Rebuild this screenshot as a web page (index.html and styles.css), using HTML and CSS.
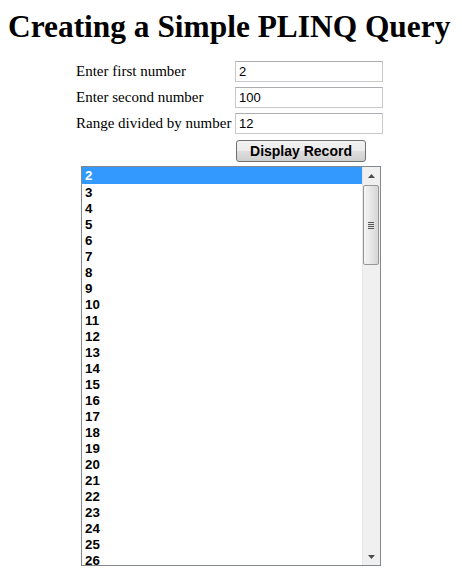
FILE: index.html
```html
<!DOCTYPE html>
<html>
<head>
<meta charset="utf-8">
<link rel="stylesheet" href="styles.css">
</head>
<body>
<h1 class="title">Creating a Simple PLINQ Query</h1>
<div class="form">
  <div class="row"><span class="label">Enter first number</span><div class="input">2</div></div>
  <div class="row"><span class="label">Enter second number</span><div class="input">100</div></div>
  <div class="row"><span class="label">Range divided by number</span><div class="input">12</div></div>
  <div class="row btnrow"><span class="label"></span><button class="btn">Display Record</button></div>
</div>
<div class="listbox">
  <div class="items">
    <div class="item selected">2</div>
    <div class="item">3</div>
    <div class="item">4</div>
    <div class="item">5</div>
    <div class="item">6</div>
    <div class="item">7</div>
    <div class="item">8</div>
    <div class="item">9</div>
    <div class="item">10</div>
    <div class="item">11</div>
    <div class="item">12</div>
    <div class="item">13</div>
    <div class="item">14</div>
    <div class="item">15</div>
    <div class="item">16</div>
    <div class="item">17</div>
    <div class="item">18</div>
    <div class="item">19</div>
    <div class="item">20</div>
    <div class="item">21</div>
    <div class="item">22</div>
    <div class="item">23</div>
    <div class="item">24</div>
    <div class="item">25</div>
    <div class="item">26</div>
  </div>
  <div class="scrollbar">
    <div class="arrow"><svg width="7" height="4" viewBox="0 0 7 4"><path d="M0 4 L3.5 0 L7 4 Z" fill="#4d4d4d"/></svg></div>
    <div class="track">
      <div class="thumb">
        <div class="grip"><span></span><span></span><span></span><span></span></div>
      </div>
    </div>
    <div class="arrow"><svg width="7" height="4" viewBox="0 0 7 4"><path d="M0 0 L3.5 4 L7 0 Z" fill="#4d4d4d"/></svg></div>
  </div>
</div>
</body>
</html>
```
FILE: styles.css
```css
html, body {
  margin: 0;
  padding: 0;
  background: #fff;
}
body {
  padding: 8px;
  font-family: "Liberation Serif", "Times New Roman", serif;
  color: #000;
}
.title {
  font-family: "Liberation Serif", "Times New Roman", serif;
  font-weight: bold;
  font-size: 31.4px;
  line-height: 37px;
  margin: 0 0 16px 0;
  white-space: nowrap;
}
.form {
  width: 310px;
  margin: 0 auto;
  display: flex;
  flex-direction: column;
  gap: 5px;
}
.row {
  display: flex;
  align-items: center;
  height: 21px;
}
.btnrow {
  height: 22px;
  margin-top: 1px;
  align-items: flex-start;
}
.label {
  width: 159px;
  padding-left: 0;
  font-size: 15px;
  white-space: nowrap;
}
.input {
  box-sizing: border-box;
  width: 148px;
  height: 21px;
  border: 1px solid #c9c9c9;
  border-top-color: #abadb3;
  padding: 2px 3px;
  font-family: "Liberation Sans", Arial, sans-serif;
  font-size: 13px;
  line-height: 15px;
}
.btn {
  box-sizing: border-box;
  width: 130px;
  height: 22px;
  margin-left: 1px;
  border: 1px solid #707070;
  border-radius: 3px;
  background: linear-gradient(#f2f2f2 0%, #ebebeb 50%, #dddddd 51%, #cfcfcf 100%);
  font-family: "Liberation Sans", Arial, sans-serif;
  font-weight: bold;
  font-size: 14px;
  color: #000;
  padding: 0;
}
.listbox {
  box-sizing: border-box;
  width: 300px;
  height: 400px;
  margin: 4px auto 0;
  border: 1px solid #828790;
  display: flex;
  overflow: hidden;
}
.items {
  flex: 1;
  overflow: hidden;
}
.item {
  height: 16px;
  line-height: 17px;
  padding-left: 3px;
  font-family: "Liberation Sans", Arial, sans-serif;
  font-weight: bold;
  font-size: 13.3px;
}
.item.selected {
  background: #3399ff;
  color: #fff;
  height: 17px;
}
.scrollbar {
  width: 17px;
  display: flex;
  flex-direction: column;
  background: #f0f0f0;
  border-left: 1px solid #e8e8e8;
}
.arrow {
  height: 17px;
  display: flex;
  align-items: center;
  justify-content: center;
}
.track {
  flex: 1;
}
.thumb {
  box-sizing: border-box;
  margin: 1px 0 0 0;
  width: 16px;
  height: 80px;
  border: 1px solid #979797;
  border-radius: 2px;
  background: linear-gradient(to right, #f5f5f5, #e6e6e6 50%, #d5d5d5);
  display: flex;
  align-items: center;
  justify-content: center;
}
.grip {
  display: flex;
  flex-direction: column;
  gap: 1px;
}
.grip span {
  display: block;
  width: 6px;
  height: 1px;
  background: #555;
}
```
